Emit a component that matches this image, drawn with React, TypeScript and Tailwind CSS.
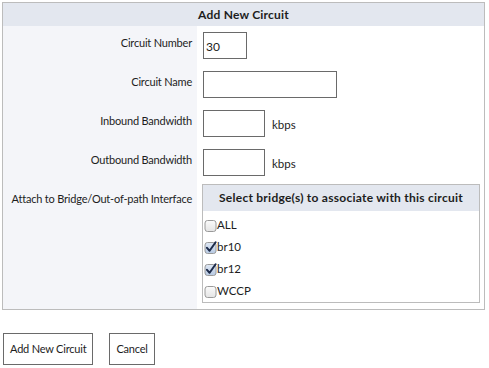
import React from "react";

const font = { fontFamily: "Lato, 'Open Sans', sans-serif" };

function Box({ checked }: { checked: boolean }) {
  return (
    <svg width="13" height="13" viewBox="0 0 13 13" className="shrink-0">
      <defs>
        <linearGradient id={checked ? "gc" : "gu"} x1="0" y1="0" x2="0" y2="1">
          <stop offset="0" stopColor={checked ? "#dfe8f5" : "#fbfbfb"} />
          <stop offset="1" stopColor={checked ? "#b7c9e2" : "#e4e4e4"} />
        </linearGradient>
      </defs>
      <rect x="1" y="1.5" width="11" height="11" rx="2.5" fill={`url(#${checked ? "gc" : "gu"})`} stroke="#9a9a9a" />
      {checked && <path d="M3 6.8 L5.6 9.8 L11.6 1.2" fill="none" stroke="#1c2a4a" strokeWidth="2" strokeLinecap="round" strokeLinejoin="round" />}
    </svg>
  );
}

function Row({ label, children, top = "pt-[6px] pl-[6px]" }: { label: string; children: React.ReactNode; top?: string }) {
  return (
    <>
      <div className="bg-[#f4f5f9] pr-[5px] pt-[10px] text-right text-[11px] leading-[14px] tracking-[-0.2px] whitespace-nowrap">{label}</div>
      <div className={`bg-white pb-[6px] ${top}`}>{children}</div>
    </>
  );
}

export default function App() {
  const bridges: [string, boolean][] = [
    ["ALL", false],
    ["br10", true],
    ["br12", true],
    ["WCCP", false],
  ];

  return (
    <div className="h-[368px] w-[489px] bg-white p-[2px] text-[12px] text-[#1d1d1d]" style={font}>
      <div className="w-[483px] border border-[#bcbcbc]">
        <div className="flex h-[23px] items-center justify-center bg-[#e3e7ef] font-bold tracking-[0.2px]">Add New Circuit</div>
        <div className="grid grid-cols-[194px_1fr]">
          <Row label="Circuit Number">
            <div className="flex h-[27px] w-[44px] items-center border border-[#6a6a6a] px-[2px] pt-[2px] text-[12px]">30</div>
          </Row>
          <Row label="Circuit Name">
            <div className="h-[27px] w-[134px] border border-[#6a6a6a]" />
          </Row>
          <Row label="Inbound Bandwidth">
            <div className="flex items-center gap-[7px]">
              <div className="h-[27px] w-[62px] border border-[#6a6a6a]" />
              <span className="pt-[3px] text-[11.5px]">kbps</span>
            </div>
          </Row>
          <Row label="Outbound Bandwidth">
            <div className="flex items-center gap-[7px]">
              <div className="h-[27px] w-[62px] border border-[#6a6a6a]" />
              <span className="pt-[3px] text-[11.5px]">kbps</span>
            </div>
          </Row>
          <Row label="Attach to Bridge/Out-of-path Interface" top="pt-[2px] pl-[5px]">
            <div className="w-[278px] border border-[#bcbcbc]">
              <div className="flex h-[26px] items-center justify-center bg-[#e3e7ef] font-bold tracking-[0.25px]">
                Select bridge(s) to associate with this circuit
              </div>
              <div className="pt-[3px] text-[11.5px]">
                {bridges.map(([name, on]) => (
                  <div key={name} className="flex h-[22px] items-center pl-[1px]">
                    <Box checked={on} />
                    <span>{name}</span>
                  </div>
                ))}
              </div>
            </div>
          </Row>
        </div>
      </div>
      <div className="mt-[23px] flex gap-[16px] pl-[1px] text-[11px] tracking-[-0.2px]">
        <button className="h-[32px] border border-[#6a6a6a] bg-white px-[6px]">Add New Circuit</button>
        <button className="h-[32px] border border-[#6a6a6a] bg-white px-[6px]">Cancel</button>
      </div>
    </div>
  );
}
